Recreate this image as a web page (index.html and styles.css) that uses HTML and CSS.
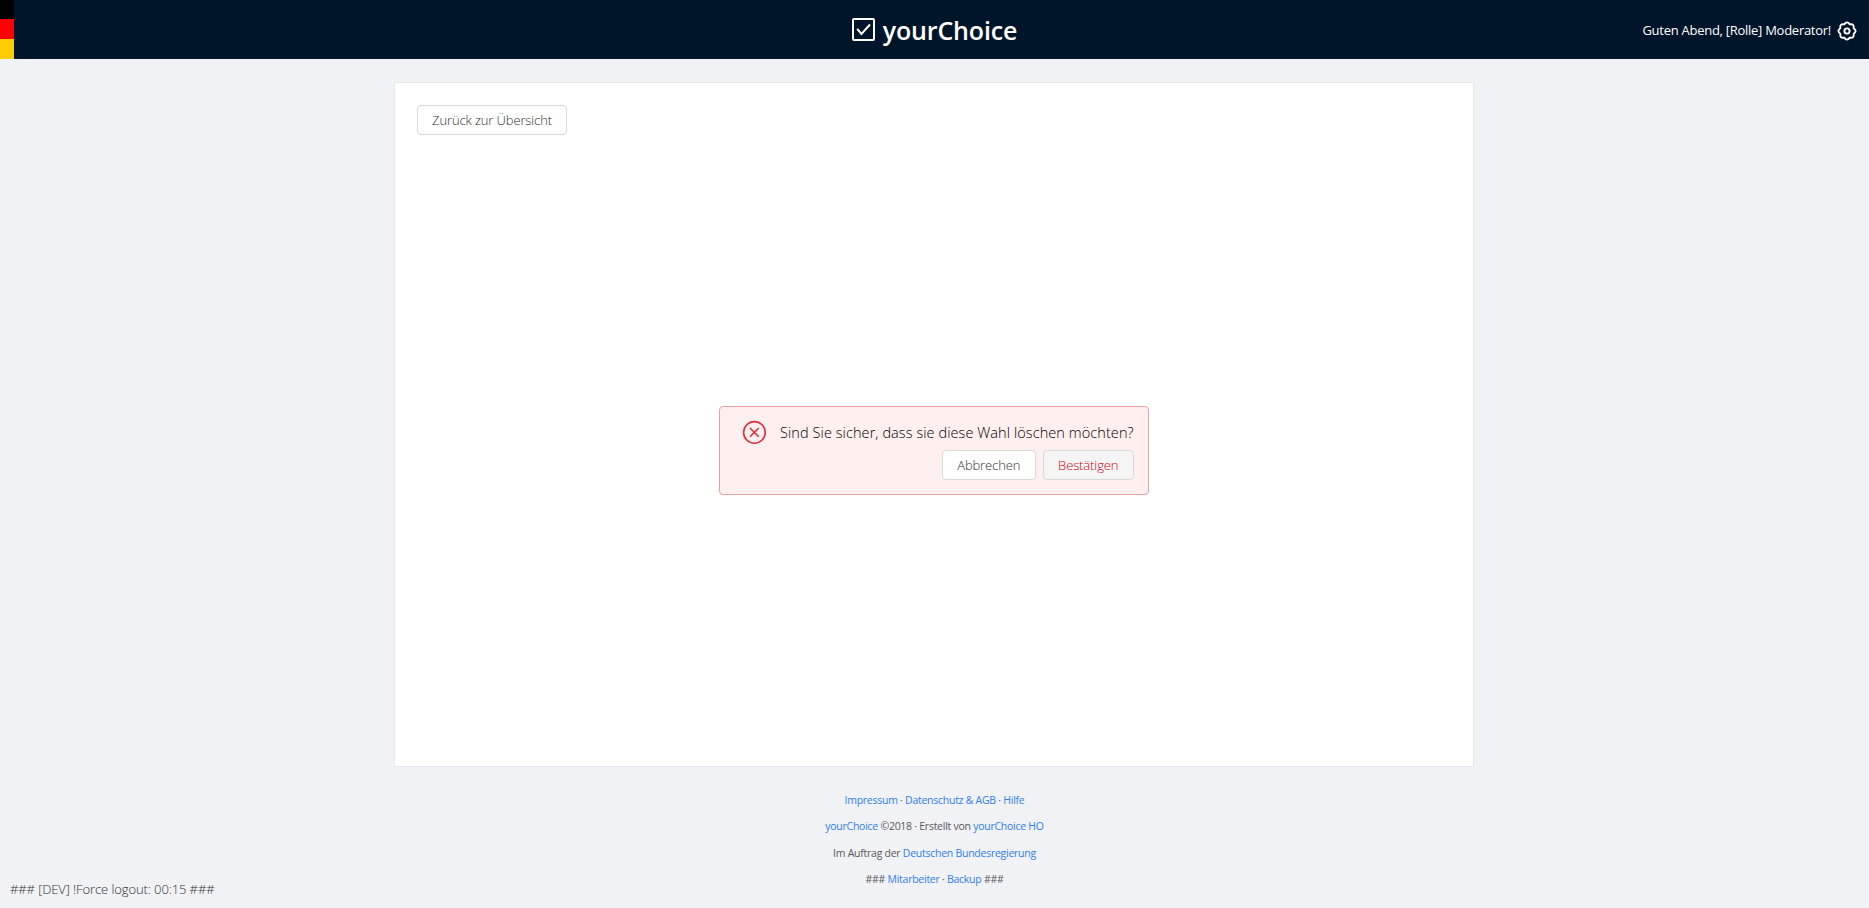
FILE: index.html
```html
<!DOCTYPE html>
<html lang="de">
<head>
<meta charset="utf-8">
<title>yourChoice</title>
<link rel="stylesheet" href="styles.css">
</head>
<body>
<header class="header">
  <div class="flag"><span class="flag-black"></span><span class="flag-red"></span><span class="flag-gold"></span></div>
  <div class="brand">
    <svg class="brand-icon" width="23" height="23" viewBox="0 0 23 23" fill="none" stroke="#fff"><rect x="1" y="1" width="21" height="21" rx="1" stroke-width="2"/><path d="M5.2 10.8 9.4 16 18 6.5" stroke-width="2"/></svg>
    <span class="brand-name">yourChoice</span>
  </div>
  <div class="user">
    <span class="greeting">Guten Abend, [Rolle] Moderator!</span>
    <svg class="gear" width="20" height="20" viewBox="0 0 20 20" fill="none" stroke="#fff" stroke-width="1.9" stroke-linejoin="round"><path d="M7.25 3.35Q10-.6 12.75 3.35Q17.5 2.5 16.65 7.25Q20.6 10 16.65 12.75Q17.5 17.5 12.75 16.65Q10 20.6 7.25 16.65Q2.5 17.5 3.35 12.75Q-.6 10 3.35 7.25Q2.5 2.5 7.25 3.35Z"/><circle cx="10" cy="10" r="2.6"/></svg>
  </div>
</header>
<main class="panel">
  <button class="btn back">Zurück zur Übersicht</button>
  <section class="alert">
    <svg class="alert-icon" width="24" height="24" viewBox="0 0 24 24" fill="none" stroke="#e0303f" stroke-width="1.6"><circle cx="12.4" cy="12.4" r="10.8"/><path d="M8 8l8.8 8.8M16.8 8l-8.8 8.8"/></svg>
    <div class="alert-body">
      <div class="alert-text">Sind Sie sicher, dass sie diese Wahl löschen möchten?</div>
      <div class="actions"><button class="btn cancel">Abbrechen</button><button class="btn confirm">Bestätigen</button></div>
    </div>
  </section>
</main>
<footer class="footer">
  <p class="line1"><a>Impressum</a> · <a>Datenschutz &amp; AGB</a> · <a>Hilfe</a></p>
  <p class="line2"><a>yourChoice</a> ©2018 · Erstellt von <a>yourChoice HO</a></p>
  <p class="line3">Im Auftrag der <a>Deutschen Bundesregierung</a></p>
  <p class="line4">### <a>Mitarbeiter</a> · <a>Backup</a> ###</p>
</footer>
<div class="session">### [DEV] !Force logout: 00:15 ###</div>
</body>
</html>
```
FILE: styles.css
```css
* { box-sizing: border-box; }
body {
  margin: 0;
  height: 908px;
  overflow: hidden;
  background: #f0f2f5;
  color: #595959;
  font-family: "Open Sans", "Noto Sans", sans-serif;
  font-size: 13px;
}
.header {
  display: grid;
  grid-template-columns: 1fr auto 1fr;
  height: 59px;
  background: #001529;
  color: #fff;
}
.flag { display: flex; flex-direction: column; width: 14px; height: 59px; }
.flag-black { height: 19px; background: #000; }
.flag-red { height: 20px; background: #f00; }
.flag-gold { height: 20px; background: #fc0; }
.brand { display: flex; align-items: center; gap: 8px; height: 59px; }
.brand-icon { margin-bottom: 1px; }
.brand-name { font-size: 25px; font-weight: 600; line-height: 57px; letter-spacing: -0.15px; padding-top: 2px; white-space: nowrap; }
.user { display: flex; align-items: center; justify-content: flex-end; gap: 6px; height: 59px; padding-right: 12px; }
.gear { margin-top: 2px; }
.greeting { font-size: 13px; letter-spacing: -0.27px; white-space: nowrap; }
.panel {
  display: flex;
  flex-direction: column;
  width: 1080px;
  height: 685px;
  margin: 23px 0 0 394px;
  padding: 22px;
  background: #fff;
  border: 1px solid #e6e8eb;
}
.btn {
  height: 30px;
  padding: 0;
  border: 1px solid #d9d9d9;
  border-radius: 4px;
  background: #fff;
  color: #303030;
  font: 300 13px/28px "Open Sans", "Noto Sans", sans-serif;
  letter-spacing: -0.12px;
  white-space: nowrap;
}
.back { width: 150px; }
.alert {
  display: flex;
  width: 430px;
  height: 89px;
  margin: 271px 0 0 302px;
  padding: 13px 15px 12px 22px;
  background: #fff0ef;
  border: 1px solid #eca0a6;
  border-radius: 4px;
}
.alert-icon { flex: none; }
.alert-body { flex: 1; margin-left: 14px; }
.alert-text { height: 30px; color: #000; font-size: 14.5px; font-weight: 300; line-height: 26px; letter-spacing: 0.08px; white-space: nowrap; }
.actions { display: flex; justify-content: flex-end; gap: 7px; }
.cancel { width: 94px; }
.confirm { width: 91px; background: #f5f5f5; color: #d00014; }
.footer { padding-top: 20px; text-align: center; font-size: 10.5px; letter-spacing: -0.26px; }
.footer p { margin: 0; height: 26.3px; line-height: 26px; white-space: nowrap; }
.footer a { color: #2f7ff0; }
.session { width: 240px; margin: -13px 0 0 10px; color: #303030; font-weight: 300; line-height: 20px; letter-spacing: -0.1px; white-space: nowrap; }
```
